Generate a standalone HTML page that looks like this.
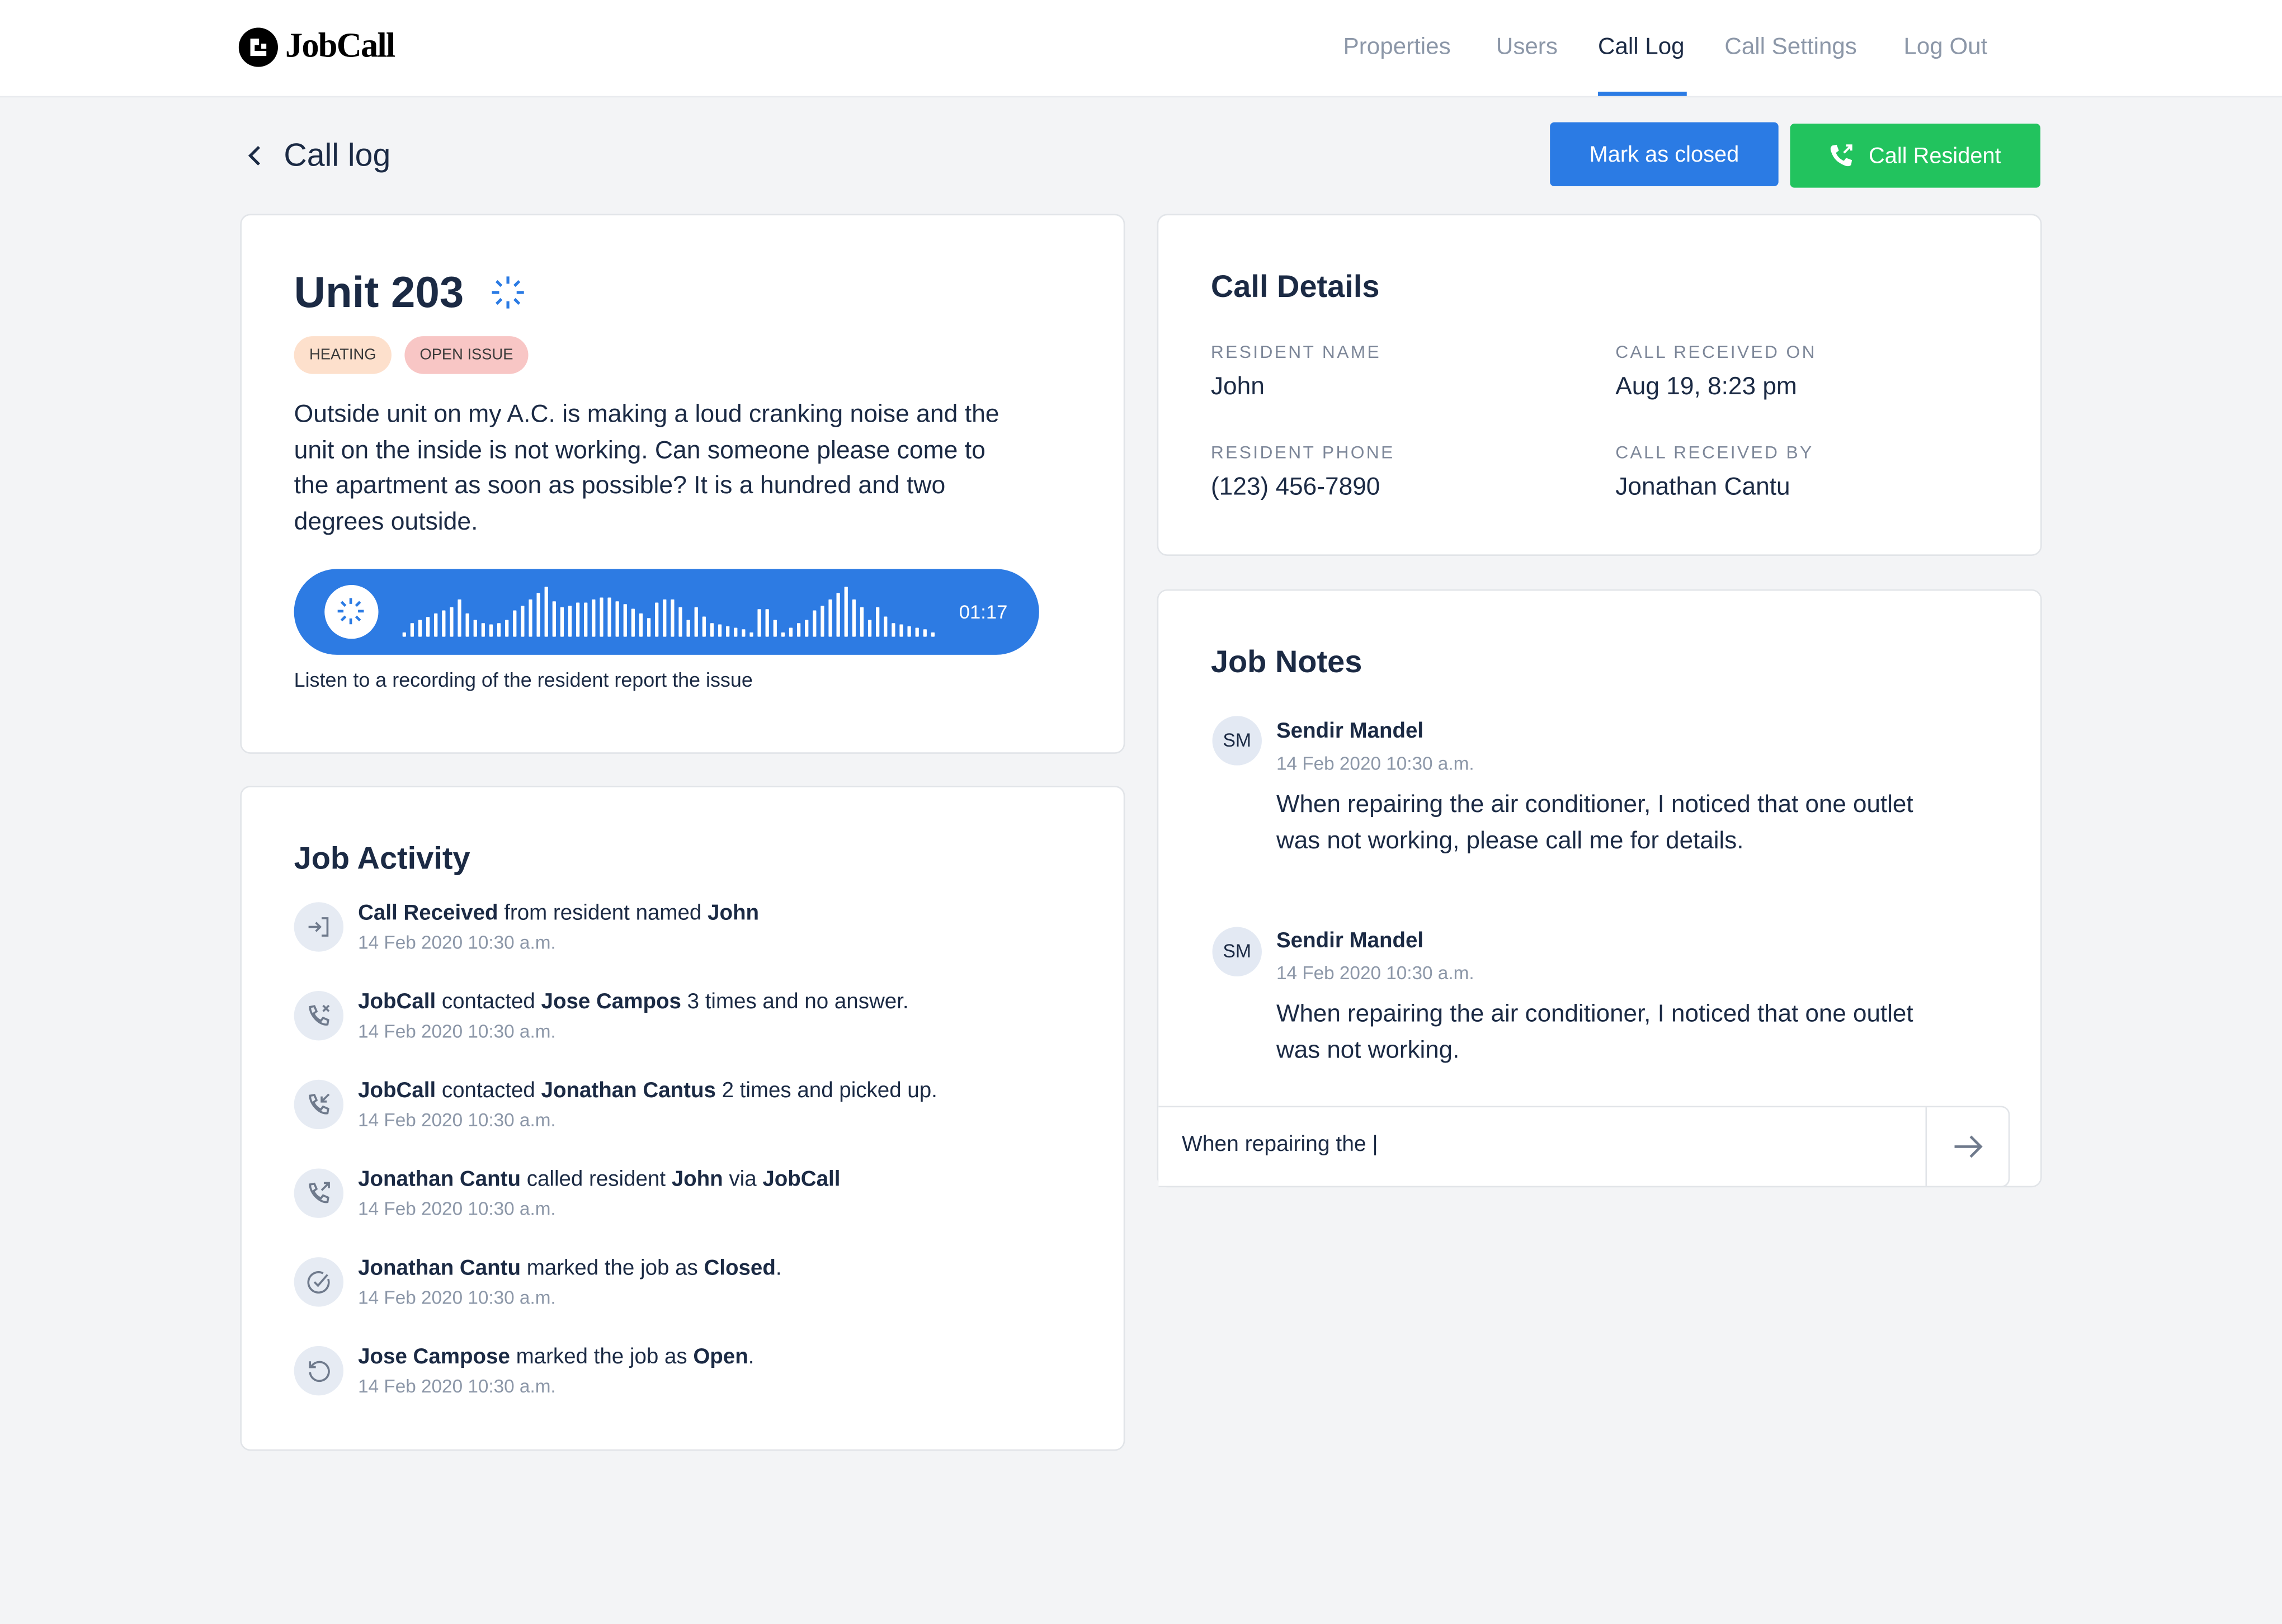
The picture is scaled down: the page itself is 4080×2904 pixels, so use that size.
<!DOCTYPE html>
<html><head><meta charset="utf-8">
<style>
html,body{margin:0;padding:0;background:#f3f4f6;}
body{width:4080px;height:2904px;overflow:hidden;}
#w{position:absolute;left:0;top:0;width:1568px;height:1116px;transform:scale(2.60204);transform-origin:0 0;background:#f3f4f6;font-family:"Liberation Sans",sans-serif;color:#1b2a44;}
.a{position:absolute;white-space:nowrap;}
.card{position:absolute;background:#fff;border:1px solid #e1e4e8;border-radius:7px;box-sizing:border-box;}
.nav{font-size:16.2px;color:#8c97a8;top:22px;line-height:20px;}
.h2{font-size:21.5px;font-weight:bold;color:#1b2a44;}
.lbl{font-size:12.2px;letter-spacing:1.3px;color:#7d8799;}
.val{font-size:17px;color:#1b2a44;}
.ic{position:absolute;width:34px;height:34px;border-radius:50%;background:#e6ebf3;}
.ic svg{position:absolute;left:8px;top:8px;}
.at{font-size:14.8px;color:#1b2a44;}
.at b{font-weight:bold;}
.dt{font-size:12.8px;color:#8c97a8;}
.av{position:absolute;width:34px;height:34px;border-radius:50%;background:#e3e9f3;font-size:13px;text-align:center;line-height:34px;color:#1b2a44;}
</style></head><body><div id="w">
<div class="a" style="left:0;top:0;width:1568px;height:66px;background:#fff;border-bottom:1px solid #e8eaee;"></div>
<svg class="a" style="left:164px;top:19px" width="27" height="27" viewBox="0 0 27 27"><circle cx="13.5" cy="13.5" r="13.5" fill="#000"/><path d="M8 7.5 H14 V12 H11 V16 H19 V19.5 H8 Z M15.5 11 H19 V14.5 H15.5 Z" fill="#fff"/></svg>
<div class="a" style="left:196px;top:18px;font-family:'Liberation Serif',serif;font-weight:bold;font-size:24px;letter-spacing:-0.7px;color:#000;line-height:28px;">JobCall</div>
<div class="a nav" style="left:923px;">Properties</div>
<div class="a nav" style="left:1028px;">Users</div>
<div class="a nav" style="left:1098px;color:#1b2a44;">Call Log</div>
<div class="a nav" style="left:1185px;">Call Settings</div>
<div class="a nav" style="left:1308px;">Log Out</div>
<div class="a" style="left:1098px;top:63px;width:61px;height:3px;background:#2b7be4;"></div>
<svg class="a" style="left:168px;top:99px" width="14" height="16" viewBox="0 0 14 16"><path d="M10 2 L4 8 L10 14" stroke="#1b2a44" stroke-width="2" fill="none"/></svg>
<div class="a" style="left:195px;top:94px;font-size:22px;line-height:26px;">Call log</div>
<div class="a" style="left:1065px;top:84px;width:157px;height:44px;background:#2b7be4;border-radius:3px;color:#fff;font-size:15.3px;text-align:center;line-height:46px;">Mark as closed</div>
<div class="a" style="left:1230px;top:85px;width:172px;height:44px;background:#22c35e;border-radius:3px;color:#fff;font-size:15.3px;line-height:46px;"><svg style="position:absolute;left:26px;top:13px" width="18" height="18" viewBox="0 0 18 18"><path d="M3 2 L6 1.5 L7.5 5.5 L5.5 7 C6.5 9.5 8.5 11.5 11 12.5 L12.5 10.5 L16.5 12 L16 15 C15.5 16.5 13 16.5 11 15.5 C6.5 13.5 4 11 2.5 7 C1.5 5 1.5 3 3 2Z" fill="#fff"/><path d="M11 7 L16 2 M12.5 2 H16 V5.5" stroke="#fff" stroke-width="1.5" fill="none"/></svg><span style="position:absolute;left:54px;">Call Resident</span></div>
<div class="card" style="left:165px;top:147px;width:608px;height:371px;"></div>
<div class="a" style="left:202px;top:184px;font-size:30px;font-weight:bold;line-height:36px;color:#1b2a44;">Unit 203</div>
<svg class="a" style="left:337px;top:189px" width="24" height="24" viewBox="-12 -12 24 24" stroke="#2b7be4" stroke-width="2"><path d="M0 -11 V-6 M0 6 V11 M-11 0 H-6 M6 0 H11 M-7.8 -7.8 L-4.5 -4.5 M7.8 -7.8 L4.5 -4.5 M-7.8 7.8 L-4.5 4.5 M7.8 7.8 L4.5 4.5"/></svg>
<div class="a" style="left:202px;top:231px;width:67px;height:26px;border-radius:13px;background:#fde0cc;font-size:10.5px;text-align:center;line-height:27px;color:#3a3a3a;">HEATING</div>
<div class="a" style="left:278px;top:231px;width:85px;height:26px;border-radius:13px;background:#f8c6c5;font-size:10.5px;text-align:center;line-height:27px;color:#3a3a3a;">OPEN ISSUE</div>
<div class="a" style="left:202px;top:273px;font-size:17.1px;line-height:24.7px;color:#1b2a44;">Outside unit on my A.C. is making a loud cranking noise and the<br>unit on the inside is not working. Can someone please come to<br>the apartment as soon as possible? It is a hundred and two<br>degrees outside.</div>
<div class="a" style="left:202px;top:391px;width:512px;height:59px;border-radius:30px;background:#2d7be3;"></div>
<div class="a" style="left:223px;top:402px;width:37px;height:37px;border-radius:50%;background:#fff;"></div>
<svg class="a" style="left:229px;top:408px" width="24" height="24" viewBox="-12 -12 24 24" stroke="#2b7be4" stroke-width="1.8"><path d="M0 -9 V-5 M0 5 V9 M-9 0 H-5 M5 0 H9 M-6.4 -6.4 L-3.6 -3.6 M6.4 -6.4 L3.6 -3.6 M-6.4 6.4 L-3.6 3.6 M6.4 6.4 L3.6 3.6"/></svg>
<svg class="a" style="left:192.2px;top:384.3px" width="538" height="76.9" viewBox="0 0 1568 600" preserveAspectRatio="none" fill="#fff" id="wave"></svg>
<div class="a" style="left:659px;top:413px;font-size:13.3px;color:#fff;line-height:16px;">01:17</div>
<div class="a" style="left:202px;top:459px;font-size:13.8px;color:#1b2a44;line-height:17px;">Listen to a recording of the resident report the issue</div>
<div class="card" style="left:165px;top:540px;width:608px;height:457px;"></div>
<div class="a h2" style="left:202px;top:577px;line-height:26px;">Job Activity</div>

<div class="ic" style="left:202px;top:620px;"><svg width="18" height="18" viewBox="0 0 18 18" fill="none" stroke="#6f7a8c" stroke-width="1.4"><path d="M2 9 H10 M7 6 L10 9 L7 12 M11 3 H15 V15 H11"/></svg></div>
<div class="a at" style="left:246px;top:620px;"><b>Call Received</b> from resident named <b>John</b></div>
<div class="a dt" style="left:246px;top:640px;">14 Feb 2020 10:30 a.m.</div>

<div class="ic" style="left:202px;top:681px;"><svg width="18" height="18" viewBox="0 0 18 18" fill="none" stroke="#6f7a8c" stroke-width="1.4"><path d="M3 3 L6 2.5 L7.5 6 L5.5 7.5 C6.5 10 8 11.5 10.5 12.5 L12 10.5 L15.5 12 L15 15 C10 16 3 9 3 3Z M12 2 L16 6 M16 2 L12 6"/></svg></div>
<div class="a at" style="left:246px;top:681px;"><b>JobCall</b> contacted <b>Jose Campos</b> 3 times and no answer.</div>
<div class="a dt" style="left:246px;top:701px;">14 Feb 2020 10:30 a.m.</div>

<div class="ic" style="left:202px;top:742px;"><svg width="18" height="18" viewBox="0 0 18 18" fill="none" stroke="#6f7a8c" stroke-width="1.4"><path d="M3 3 L6 2.5 L7.5 6 L5.5 7.5 C6.5 10 8 11.5 10.5 12.5 L12 10.5 L15.5 12 L15 15 C10 16 3 9 3 3Z M16 2 L11 7 M11 3.5 V7 H14.5"/></svg></div>
<div class="a at" style="left:246px;top:742px;"><b>JobCall</b> contacted <b>Jonathan Cantus</b> 2 times and picked up.</div>
<div class="a dt" style="left:246px;top:762px;">14 Feb 2020 10:30 a.m.</div>

<div class="ic" style="left:202px;top:803px;"><svg width="18" height="18" viewBox="0 0 18 18" fill="none" stroke="#6f7a8c" stroke-width="1.4"><path d="M3 3 L6 2.5 L7.5 6 L5.5 7.5 C6.5 10 8 11.5 10.5 12.5 L12 10.5 L15.5 12 L15 15 C10 16 3 9 3 3Z M11 7 L16 2 M12.5 2 H16 V5.5"/></svg></div>
<div class="a at" style="left:246px;top:803px;"><b>Jonathan Cantu</b> called resident <b>John</b> via <b>JobCall</b></div>
<div class="a dt" style="left:246px;top:823px;">14 Feb 2020 10:30 a.m.</div>

<div class="ic" style="left:202px;top:864px;"><svg width="18" height="18" viewBox="0 0 18 18" fill="none" stroke="#6f7a8c" stroke-width="1.4"><path d="M15.5 7 A7 7 0 1 1 12 3 M6 9 L8.5 11.5 L15 4"/></svg></div>
<div class="a at" style="left:246px;top:864px;"><b>Jonathan Cantu</b> marked the job as <b>Closed</b>.</div>
<div class="a dt" style="left:246px;top:884px;">14 Feb 2020 10:30 a.m.</div>

<div class="ic" style="left:202px;top:925px;"><svg width="18" height="18" viewBox="0 0 18 18" fill="none" stroke="#6f7a8c" stroke-width="1.4"><path d="M4 6 A6.5 6.5 0 1 1 3 10 M3 2.5 V6.5 H7"/></svg></div>
<div class="a at" style="left:246px;top:925px;"><b>Jose Campose</b> marked the job as <b>Open</b>.</div>
<div class="a dt" style="left:246px;top:945px;">14 Feb 2020 10:30 a.m.</div>
<div class="card" style="left:795px;top:147px;width:608px;height:235px;"></div>
<div class="a h2" style="left:832px;top:184px;line-height:26px;">Call Details</div>
<div class="a lbl" style="left:832px;top:235px;">RESIDENT NAME</div>
<div class="a val" style="left:832px;top:256px;">John</div>
<div class="a lbl" style="left:1110px;top:235px;">CALL RECEIVED ON</div>
<div class="a val" style="left:1110px;top:256px;">Aug 19, 8:23 pm</div>
<div class="a lbl" style="left:832px;top:304px;">RESIDENT PHONE</div>
<div class="a val" style="left:832px;top:325px;">(123) 456-7890</div>
<div class="a lbl" style="left:1110px;top:304px;">CALL RECEIVED BY</div>
<div class="a val" style="left:1110px;top:325px;">Jonathan Cantu</div>
<div class="card" style="left:795px;top:405px;width:608px;height:411px;"></div>
<div class="a h2" style="left:832px;top:442px;line-height:26px;">Job Notes</div>
<div class="av" style="left:833px;top:492px;">SM</div>
<div class="a" style="left:877px;top:495px;font-size:14.8px;font-weight:bold;">Sendir Mandel</div>
<div class="a dt" style="left:877px;top:517px;">14 Feb 2020 10:30 a.m.</div>
<div class="a" style="left:877px;top:540px;font-size:16.9px;line-height:25px;">When repairing the air conditioner, I noticed that one outlet<br>was not working, please call me for details.</div>
<div class="av" style="left:833px;top:637px;">SM</div>
<div class="a" style="left:877px;top:639px;font-size:14.8px;font-weight:bold;">Sendir Mandel</div>
<div class="a dt" style="left:877px;top:661px;">14 Feb 2020 10:30 a.m.</div>
<div class="a" style="left:877px;top:684px;font-size:16.9px;line-height:25px;">When repairing the air conditioner, I noticed that one outlet<br>was not working.</div>
<div class="a" style="left:796px;top:760px;width:585px;height:56px;border:1px solid #e1e4e8;border-left:none;border-radius:0 6px 6px 0;box-sizing:border-box;background:#fff;"></div>
<div class="a" style="left:1323px;top:761px;width:1px;height:54px;background:#e1e4e8;"></div>
<div class="a" style="left:812px;top:778px;font-size:15px;">When repairing the |</div>
<svg class="a" style="left:1341px;top:777px" width="22" height="22" viewBox="0 0 22 22" fill="none" stroke="#6f7a8c" stroke-width="1.8"><path d="M2 11 H20 M13 4 L20 11 L13 18"/></svg>
</div>
<script>
var t=[395,345,328,312,293,277,260,218,293,328,345,352,345,328,277,252,218,183,150,228,260,252,235,235,218,208,208,228,243,268,293,318,235,218,218,260,328,260,310,345,352,362,370,378,395,270,270,328,395,370,345,328,277,252,218,183,150,218,260,328,260,310,345,352,362,370,378,395];
var s='';for(var i=0;i<t.length;i++){var x=250+i*15.8;s+='<rect x="'+(x-3.5)+'" y="'+t[i]+'" width="7" height="'+(418-t[i])+'" rx="2"/>';}
document.getElementById('wave').innerHTML=s;
</script>
</body></html>
